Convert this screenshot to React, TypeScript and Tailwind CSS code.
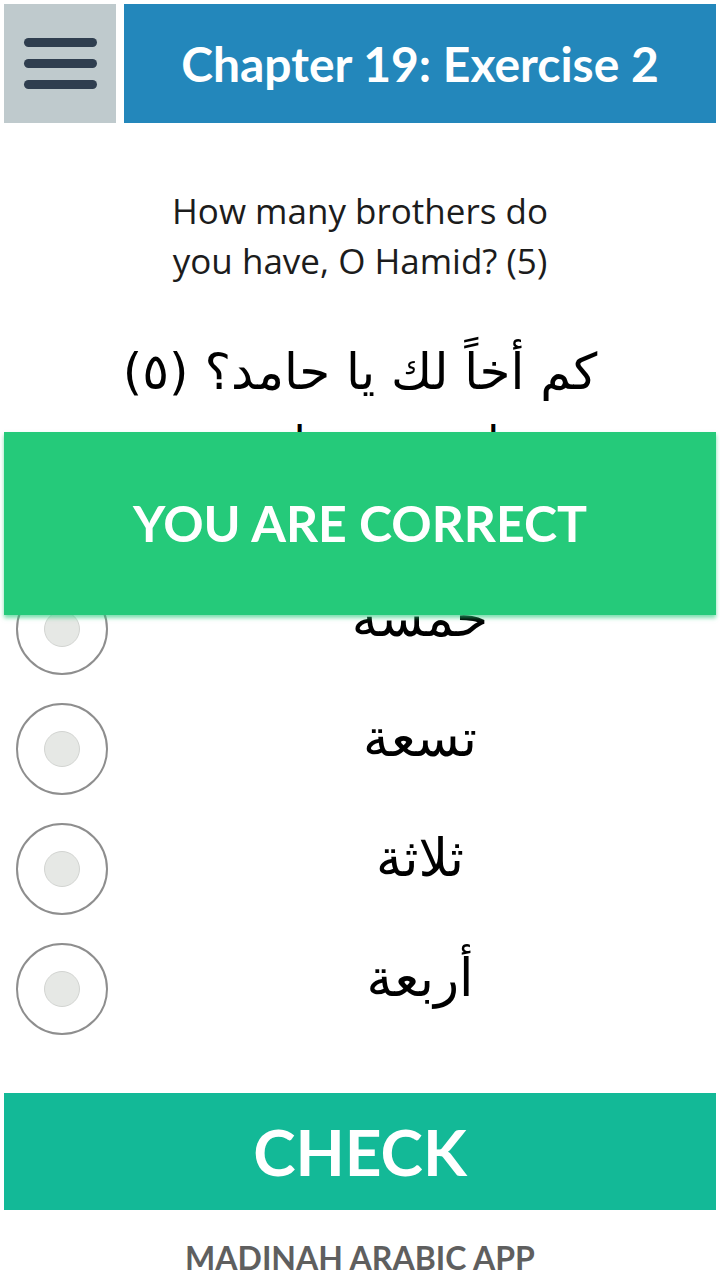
import { useState } from "react"

const options = ["خمسة", "تسعة", "ثلاثة", "أربعة"]

function Radio({ checked, onClick }: { checked: boolean; onClick: () => void }) {
  return (
    <button
      onClick={onClick}
      className="flex items-center justify-center w-[92px] h-[92px] rounded-full border-2 border-[#8e8e8e] bg-white flex-shrink-0"
    >
      <span
        className={
          checked
            ? "w-[36px] h-[36px] rounded-full bg-[#13b997] border border-[#0f9a7e]"
            : "w-[36px] h-[36px] rounded-full bg-[#e6e8e5] border border-[#d2d4d1]"
        }
      />
    </button>
  )
}

export default function App() {
  const [selected, setSelected] = useState(-1)

  return (
    <div className="relative w-[720px] h-[1280px] bg-white overflow-hidden font-['Open_Sans',sans-serif]">
      {/* header */}
      <div className="flex gap-2 p-1 h-[127px]">
        <div className="flex flex-col items-center justify-center gap-[12px] w-[112px] bg-[#bfcacd]">
          <span className="block w-[73px] h-[9px] rounded-full bg-[#2f3e4f]" />
          <span className="block w-[73px] h-[9px] rounded-full bg-[#2f3e4f]" />
          <span className="block w-[73px] h-[9px] rounded-full bg-[#2f3e4f]" />
        </div>
        <div className="flex-1 flex items-center justify-center bg-[#2387bb]">
          <h1 className="text-white text-[48px] font-bold leading-none font-['Lato',sans-serif]">
            Chapter 19: Exercise 2
          </h1>
        </div>
      </div>

      {/* question */}
      <div className="mt-[59px] text-center text-[35px] leading-[50px] text-[#1c1c1c]">
        <p>How many brothers do</p>
        <p>you have, O Hamid? (5)</p>
      </div>

      <p dir="rtl" className="mt-[51px] h-[70px] text-center text-[50px] leading-[70px] text-black font-['DejaVu_Sans',sans-serif]">
        كم أخاً لك يا حامد؟ (٥)
      </p>
      <p dir="rtl" className="h-[162px] text-center text-[44px] leading-[70px] text-black font-['DejaVu_Sans',sans-serif]">
        لي خمسة إخوة
      </p>

      {/* options */}
      <div className="flex flex-col">
        {options.map((o, i) => (
          <div key={o} className="flex items-center h-[120px] pl-4 pr-1">
            <Radio checked={selected === i} onClick={() => setSelected(i)} />
            <span dir="rtl" className="flex-1 ml-4 -mt-[22px] text-center text-[52px] leading-[70px] text-black font-['DejaVu_Sans',sans-serif]">
              {o}
            </span>
          </div>
        ))}
      </div>

      {/* check */}
      <div className="px-1 mt-[44px]">
        <button className="w-full h-[117px] bg-[#13b997] text-white text-[64px] font-bold font-['Lato',sans-serif]">
          CHECK
        </button>
      </div>
      <p className="mt-[24px] text-center text-[32px] font-bold text-[#5f5f5f] font-['Lato',sans-serif]">
        MADINAH ARABIC APP
      </p>

      {/* result banner */}
      <div className="absolute left-1 right-1 top-[432px] h-[183px] flex items-center justify-center bg-[#25ca7a] shadow-[0_3px_4px_rgba(37,202,122,0.6)]">
        <span className="text-white text-[50px] font-bold font-['Lato',sans-serif]">
          YOU ARE CORRECT
        </span>
      </div>
    </div>
  )
}
